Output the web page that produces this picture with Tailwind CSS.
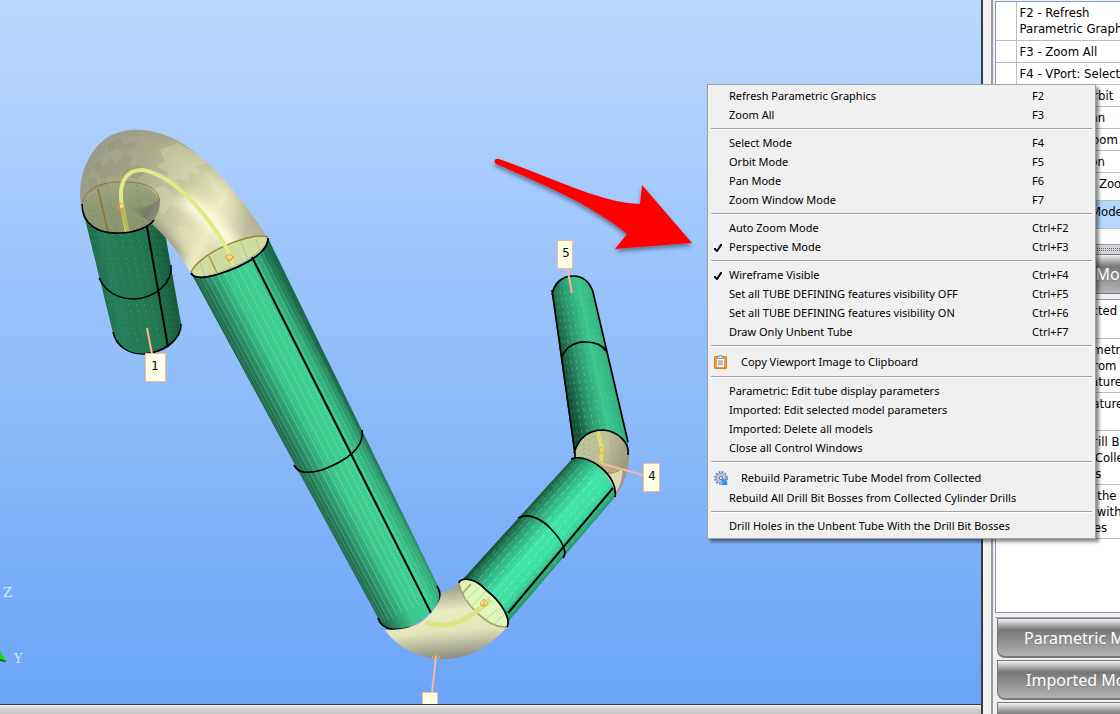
<!DOCTYPE html>
<html lang="en">

<head>
    <meta charset="UTF-8">
    <meta name="viewport" content="width=device-width, initial-scale=1.0">
    <title>Tube Viewport</title>
    <script src="https://cdn.jsdelivr.net/npm/@tailwindcss/browser@4"></script>
</head>

<body class="relative flex h-screen overflow-hidden bg-[#f0f0f0] font-['DejaVu_Sans_Condensed','DejaVu_Sans',sans-serif] text-[13px] text-black">

    <!-- Viewport -->
    <main class="flex min-w-0 flex-1 flex-col border-r-2 border-[#3a3d42]">
        <div class="min-h-0 flex-1 overflow-hidden bg-linear-to-b from-[#bbd8fd] to-[#6ba4f7]">
            <svg class="block h-[704px] w-[981px] max-w-none" viewBox="0 0 981 704" fill="none">
                <defs>
                    <linearGradient id="tube1" gradientUnits="userSpaceOnUse" x1="98" y1="287" x2="173" y2="274">
                        <stop offset="0" stop-color="#1f6b4c" />
                        <stop offset=".2" stop-color="#26805b" />
                        <stop offset=".7" stop-color="#21764f" />
                        <stop offset="1" stop-color="#175a3c" />
                    </linearGradient>
                    <linearGradient id="tube2" gradientUnits="userSpaceOnUse" x1="286" y1="449" x2="353" y2="413">
                        <stop offset="0" stop-color="#1c5f45" />
                        <stop offset=".15" stop-color="#288562" />
                        <stop offset=".4" stop-color="#3ac78c" />
                        <stop offset=".7" stop-color="#3cd092" />
                        <stop offset=".88" stop-color="#2ea676" />
                        <stop offset="1" stop-color="#1a6b4a" />
                    </linearGradient>
                    <linearGradient id="tube3" gradientUnits="userSpaceOnUse" x1="518" y1="518" x2="565" y2="559">
                        <stop offset="0" stop-color="#175238" />
                        <stop offset=".22" stop-color="#2ea77a" />
                        <stop offset=".5" stop-color="#40e5a8" />
                        <stop offset=".75" stop-color="#3edea2" />
                        <stop offset="1" stop-color="#1f8a61" />
                    </linearGradient>
                    <linearGradient id="tube4" gradientUnits="userSpaceOnUse" x1="563" y1="365" x2="610" y2="355">
                        <stop offset="0" stop-color="#15503a" />
                        <stop offset=".3" stop-color="#2a946b" />
                        <stop offset=".65" stop-color="#3bc891" />
                        <stop offset="1" stop-color="#31ad7c" />
                    </linearGradient>
                    <linearGradient id="bend1" gradientUnits="userSpaceOnUse" x1="88" y1="160" x2="245" y2="235">
                        <stop offset="0" stop-color="#a0a18c" />
                        <stop offset=".3" stop-color="#aaab8a" />
                        <stop offset=".6" stop-color="#cbcba3" />
                        <stop offset=".8" stop-color="#eceabf" />
                        <stop offset="1" stop-color="#bdbc9c" />
                    </linearGradient>
                    <linearGradient id="bend2" gradientUnits="userSpaceOnUse" x1="440" y1="590" x2="446" y2="660">
                        <stop offset="0" stop-color="#a5a592" />
                        <stop offset=".3" stop-color="#e9ecc0" />
                        <stop offset=".6" stop-color="#e3e4ba" />
                        <stop offset="1" stop-color="#85887c" />
                    </linearGradient>
                    <linearGradient id="bend3" gradientUnits="userSpaceOnUse" x1="575" y1="445" x2="630" y2="462">
                        <stop offset="0" stop-color="#bcc69d" />
                        <stop offset=".5" stop-color="#bfc19a" />
                        <stop offset=".85" stop-color="#a1a085" />
                        <stop offset="1" stop-color="#9c9a93" />
                    </linearGradient>
                    <linearGradient id="throat" gradientUnits="userSpaceOnUse" x1="130" y1="206" x2="160" y2="222">
                        <stop offset="0" stop-color="#7a8063" stop-opacity="0" />
                        <stop offset=".5" stop-color="#76786a" stop-opacity=".9" />
                        <stop offset="1" stop-color="#969488" />
                    </linearGradient>
                    <linearGradient id="mouth" gradientUnits="userSpaceOnUse" x1="121" y1="183" x2="121" y2="233">
                        <stop offset="0" stop-color="#9ca47e" />
                        <stop offset=".5" stop-color="#8d9971" />
                        <stop offset="1" stop-color="#8b956c" />
                    </linearGradient>
                    <filter id="soft" x="-30%" y="-30%" width="160%" height="160%">
                        <feGaussianBlur stdDeviation="6" />
                    </filter>
                    <filter id="drop" x="-10%" y="-10%" width="120%" height="130%">
                        <feDropShadow dx="0" dy="3" stdDeviation="2" flood-color="#1d3557" flood-opacity=".55" />
                    </filter>
                    <clipPath id="bend1-clip">
                        <path d="M81 205C77 178 88 150 108 137C130 125 160 128 188 147C224 174 250 209 268 239C266 258 200 287 191 273C180 255 168 238 152 224C130 238 90 236 81 205Z" />
                    </clipPath>
                </defs>

                <!-- Tube 1 -->
                <path d="M84 215L113 333C118 352 142 358 164 350C176 343 181 334 181 323L163 222Z" fill="url(#tube1)" />
                <g class="stripes" data-edges="88,228,118,345 160,228,178,335" data-count="13" data-color="#54967a" data-dash="2 4"></g>
                <path d="M99 278C106 292 118 299 134 299C154 298 173 284 171 265M113 332C116 346 128 354 143 354C164 353 182 338 181 324" stroke="#000" stroke-width="1.5" />
                <path d="M147 227L168 347" stroke="#000" stroke-width="2" />

                <!-- Bend 1 -->
                <path d="M81 205C77 178 88 150 108 137C130 125 160 128 188 147C224 174 250 209 268 239C266 258 200 287 191 273C180 255 168 238 152 224C130 238 90 236 81 205Z" fill="url(#bend1)" />
                <g clip-path="url(#bend1-clip)">
                    <path d="M182 200Q215 215 236 252" stroke="#fffce0" stroke-width="16" filter="url(#soft)" />
                    <path d="M180 262Q163 235 145 222" stroke="#77776b" stroke-width="9" filter="url(#soft)" />
                    <path d="M80 205C78 175 88 148 112 136C150 118 190 145 215 168C240 192 258 220 268 239" stroke="#77796f" stroke-width="5" opacity=".5" filter="url(#soft)" />
                    <path d="M92 165l9-5 2 7 8-9 5 5 9-12 8 8-4 7 9 1-6 8-10-5-4 9-9-4-8 6zM108 145l12-7 4 6 14-3-4 8-12 4-5-5-8 4zM88 180l8-3 2 8 7-6 5 9-8 5-5-4-7 4zM122 165l9 5 7-6 8 7-9 9-6-4-9 2z" fill="#7f8068" opacity=".22" />
                    <path d="M160 150l18-7 20 12 10 9-12 2 5 9-14-3 3 9-14-2 4 7-17-4 6-9-12-7 8-5zM150 190l14-5 10 11 12 2-2 9-14-1-7 9-9-11-8-2zM176 228l10-5 7 11-8 7zM205 172l12 8 8 15-11-3z" fill="#e9e7c0" opacity=".3" />
                </g>
                <ellipse cx="121" cy="208" rx="39" ry="25" transform="rotate(-8 121 208)" fill="url(#mouth)" />
                <path d="M128 206C142 210 154 205 160 198C160 208 157 217 151 223Z" fill="url(#throat)" />
                <path d="M82 206C84 187 105 181 126 182C145 182 160 189 159 201" stroke="#857633" />
                <path d="M98 189L108 232" stroke="#857633" stroke-width="1.5" />
                <path d="M86 200L94 225M91 195L100 229M107 185L117 233M137 185L143 228" stroke="#7b864f" stroke-dasharray="2 3" opacity=".6" />
                <path d="M191 273C198 252 252 232 268 238C263 258 208 281 191 273Z" fill="#cfdc9f" />
                <path d="M191 272C202 251 254 231 268 237" stroke="#99843e" stroke-width="1.5" />
                <path d="M209 256L217 273" stroke="#a49554" stroke-width="1.5" />
                <path d="M200 263L205 277M226 248L233 267M241 242L248 260M256 239L260 252" stroke="#b9c08a" />
                <path d="M127 232L122 206C118 183 126 169 143 170C173 175 208 214 227 249L234 266" stroke="#dfeb86" stroke-width="4" />
                <path d="M122 208L128 232" stroke="#b9b750" stroke-width="4" />
                <path d="M82 204C82 225 99 234 119 233C136 233 150 226 154 220M191 273C194 279 206 278 219 274C245 266 269 252 268 238" stroke="#000" stroke-width="1.6" />
                <path d="M117 206l4-3 4 3-4 3zM118 207l3 4 4-4M225 257l4-3 5 3-5 3zM227 258l2 4 4-4" stroke="#f4983f" />

                <!-- Tube 2 -->
                <path d="M191 273C194 279 206 278 219 274C245 266 269 252 268 238L440 590C443 602 432 613 415 624C402 632 382 633 378 618Z" fill="url(#tube2)" />
                <g class="stripes" data-edges="195,278,381,624 267,248,440,594" data-count="17" data-color="#79dbb0" data-dash="none"></g>
                <path d="M191 273C194 279 206 278 219 274C245 266 269 252 268 238M294 465C298 473 306 474 322 470C343 462 365 450 362 430M378 618C383 633 399 630 413 627C430 620 447 602 437 586" stroke="#000" stroke-width="1.7" />
                <path d="M252 257L431 613" stroke="#000" stroke-width="2" />

                <!-- Bend 2 -->
                <path d="M385 630C400 630 417 629 431 613C437 606 441 599 441 592C449 591 455 588 459 582C474 573 511 606 507 627C487 650 464 659 443 659C417 659 396 646 385 630Z" fill="url(#bend2)" />
                <path d="M459 582C461 578 473 577 486 590C501 602 510 617 507 627C492 629 463 604 459 582Z" fill="#def5bb" />
                <path d="M459 583C462 602 488 629 507 627M462 594L471 584" stroke="#a5a063" stroke-width="1.5" />
                <path d="M466 600L478 588M471 607L485 592M478 613L493 600M486 619L499 608M494 624L504 615" stroke="#c0d69a" />
                <path d="M425 622C446 630 467 623 490 599" stroke="#d9e683" stroke-width="5" />
                <path d="M480 603l4-4 4 4-4 4zM480 605h8M484 599v8M432 657l4-3 4 3-4 4z" stroke="#f6a84c" />

                <!-- Tube 4 -->
                <path d="M552 294C554 283 563 276 573 276C584 276 591 283 593 291L628 442V455C615 432 590 431 574 453Z" fill="url(#tube4)" />
                <g class="stripes" data-edges="554,292,575,446 590,288,624,436" data-count="11" data-color="#76c5a2" data-dash="3 4"></g>

                <!-- Bend 3 -->
                <path d="M574 452C580 436 591 430 603 430C616 431 627 440 629 452C630 469 625 483 615 497C612 478 592 459 575 459Z" fill="url(#bend3)" />
                <path d="M622 468Q624 480 615 494L606 474Z" fill="#dcd9b5" />
                <path d="M584 443v13M589 439v19M594 436v22M610 435l3 31M616 437l3 28M621 441l2 19" stroke="#a6aa83" stroke-dasharray="2 3" />
                <path d="M628 457C625 468 617 474 606 473" stroke="#a2954d" stroke-width="1.5" />
                <path d="M598 432L602 449L601 464" stroke="#dbdf74" stroke-width="4" />
                <path d="M597 451l4-4 5 4-5 2zM598 466l4-5 4 5-4 3zM598 453h7" stroke="#f6a84c" />

                <!-- Tube 3 -->
                <path d="M463 579L572 459C590 452 612 478 615 492V497L508 622C507 602 482 580 463 579Z" fill="url(#tube3)" />
                <g class="stripes" data-edges="467,580,576,459 507,620,614,495" data-count="12" data-color="#90f2cc" data-dash="6 3"></g>
                <path d="M459 583C459 578 474 576 486 590C503 603 511 620 507 627M571 459C588 452 619 476 615 497M518 518C529 512 543 520 551 529C562 540 568 553 563 558" stroke="#000" stroke-width="1.7" />
                <path d="M508 613L613 488" stroke="#000" stroke-width="2" />
                <path d="M552 295C554 283 562 276 573 276C585 276 590 283 593 292L628 442M562 357C565 347 576 341 587 342C596 342 603 346 606 351M574 453C579 437 590 430 603 430C618 431 630 443 628 455M552 290L575 453V458" stroke="#000" stroke-width="1.7" />

                <!-- Leaders and node labels -->
                <path d="M147 328L152 354M567 267L572 293M603 464L643 475M436 656L432 693" stroke="#ffb597" stroke-width="2" />
                <g fill="#ffffe6" stroke="#ffb597">
                    <rect x="145.500" y="353.500" width="20" height="28" />
                    <rect x="557.500" y="240.500" width="15" height="28" />
                    <rect x="643.500" y="463.500" width="16" height="28" />
                    <rect x="422.500" y="692.500" width="15" height="14" />
                </g>
                <g fill="#000" font-size="13" text-anchor="middle" font-family="DejaVu Sans Condensed, DejaVu Sans, sans-serif">
                    <text x="155" y="370">1</text>
                    <text x="566" y="257">5</text>
                    <text x="652" y="480">4</text>
                </g>

                <!-- Axis marker -->
                <g fill="#d5e6fd" font-size="13" font-family="DejaVu Serif, serif">
                    <text x="3" y="597">Z</text>
                    <text x="14" y="663">Y</text>
                </g>
                <path d="M0 651L6 661L0 660Z" fill="#11e000" />
                <path d="M0 659L6 661V662L0 661Z" fill="#145c12" />

                <!-- Arrow -->
                <path d="M499 159C560 181 603 203 640 204L642 185L692 243L615 249L627 234C590 203 530 179 496 164C493 161 495 158 499 159Z" fill="#fe0000" filter="url(#drop)" />
            </svg>
        </div>
        <footer class="h-[10px] shrink-0 border-t border-[#3a3d42] bg-linear-to-b from-[#eeeeee] via-[#d0d0d0] to-[#c6c6c6]"></footer>
    </main>

    <!-- Side panel -->
    <aside class="flex w-[137px] shrink-0 flex-col overflow-hidden whitespace-nowrap pl-2">
        <div class="flex flex-1 flex-col border-l-2 border-[#9a9a9a] pl-[2px]">
            <div class="mt-px h-[244px] w-[240px] shrink-0 overflow-hidden border border-[#7f9db9] bg-white">
                <table class="w-full border-collapse leading-4">
                    <tbody id="hotkeys"></tbody>
                </table>
            </div>
            <div class="flex h-[9px] shrink-0 items-center bg-[#d4d4d4]">
                <div class="h-[3px] w-full border-y border-dotted border-[#666]"></div>
            </div>
            <button class="ml-[2px] h-10 w-[240px] shrink-0 rounded-bl-lg border border-[#777] bg-linear-to-b from-[#f4f4f4] via-[#777] via-30% to-[#b4b4b4] pl-6 text-left font-['Noto_Sans',sans-serif] text-base text-white text-shadow-2xs">Collected Mod</button>
            <div class="mt-[5px] h-[314px] w-[240px] shrink-0 overflow-hidden border border-[#7f9db9] bg-white">
                <table class="w-full border-collapse leading-4">
                    <tbody id="actions"></tbody>
                </table>
            </div>
            <div class="mt-1 flex w-[240px] flex-col gap-[2px] border-t border-[#aaa] pl-[2px]">
                <button class="h-10 rounded-bl-lg border border-b-2 border-[#777] bg-linear-to-b from-[#f4f4f4] via-[#777] via-30% to-[#b4b4b4] pl-[26px] text-left font-['Noto_Sans',sans-serif] text-base text-white text-shadow-2xs">Parametric Model</button>
                <button class="h-10 rounded-bl-lg border border-b-2 border-[#777] bg-linear-to-b from-[#f4f4f4] via-[#777] via-30% to-[#b4b4b4] pl-[28px] text-left font-['Noto_Sans',sans-serif] text-base text-white text-shadow-2xs">Imported Models</button>
                <button aria-label="More" class="h-10 rounded-bl-lg border border-[#777] bg-linear-to-b from-[#f4f4f4] via-[#777] via-30% to-[#b4b4b4]"></button>
            </div>
        </div>
    </aside>

    <!-- Context menu -->
    <div id="menu" role="menu" class="absolute top-[84px] right-6 flex w-[389px] flex-col border border-[#a0a0a0] bg-[#f0f0f0] px-[3px] py-[2px] font-['Noto_Sans','Open_Sans',sans-serif] text-[11px] shadow-[3px_3px_3px_rgba(0,0,0,0.45)]"></div>

    <script>
        const check = '<svg class="h-2 w-2" viewBox="0 0 8 8" fill="none" stroke="#000" stroke-width="2"><path d="M1 4V5L3 7L7 1V2"/></svg>';
        const clipboard = '<svg class="h-[14px] w-[13px]" viewBox="0 0 13 14"><rect x=".5" y="1.500" width="12" height="12" rx=".5" fill="#f39a33" stroke="#d08030"/><rect x="3" y="3.500" width="7" height="8.500" fill="#fff"/><path d="M4 5h5v6H4z" fill="#c3c5dc"/><path d="M4 6.500h5M4 8.500h5" stroke="#a4a6c2" stroke-width=".7"/><path d="M3.500 3.500v-2h2V.5h2v1h2v2z" fill="#e4e4df" stroke="#85857c" stroke-width=".8"/></svg>';
        const gear = '<svg class="h-[15px] w-[15px]" viewBox="0 0 15 15"><circle cx="7" cy="7" r="6" fill="none" stroke="#7a86ba" stroke-width="2" stroke-dasharray="1.800 1.340"/><circle cx="7" cy="7" r="4.800" fill="#bcc3e2" stroke="#8f9acb"/><circle cx="7" cy="7" r="1.600" fill="#f0f0fa" stroke="#6a749f"/><path d="M7 10l2-2h4v5l1 1H8l-1-1 2-2z" fill="#2c8fe8"/><path d="M6 13l3-2M10 8l4 4" stroke="#6fc0f8"/></svg>';

        const menuGroups = [
            [["Refresh Parametric Graphics", "F2"], ["Zoom All", "F3"]],
            [["Select Mode", "F4"], ["Orbit Mode", "F5"], ["Pan Mode", "F6"], ["Zoom Window Mode", "F7"]],
            [["Auto Zoom Mode", "Ctrl+F2"], ["Perspective Mode", "Ctrl+F3", check]],
            [["Wireframe Visible", "Ctrl+F4", check], ["Set all TUBE DEFINING features visibility OFF", "Ctrl+F5"], ["Set all TUBE DEFINING features visibility ON", "Ctrl+F6"], ["Draw Only Unbent Tube", "Ctrl+F7"]],
            [["Copy Viewport Image to Clipboard", "", clipboard]],
            [["Parametric: Edit tube display parameters", ""], ["Imported: Edit selected model parameters", ""], ["Imported: Delete all models", ""], ["Close all Control Windows", ""]],
            [["Rebuild Parametric Tube Model from Collected", "", gear], ["Rebuild All Drill Bit Bosses from Collected Cylinder Drills", ""]],
            [["Drill Holes in the Unbent Tube With the Drill Bit Bosses", ""]]
        ];

        document.getElementById('menu').innerHTML = menuGroups.map(group => group.map(([label, key, icon]) => {
            const large = icon && icon !== check;
            return `
                <button role="menuitem" class="flex w-full items-center text-left whitespace-nowrap ${large ? 'h-[22px]' : 'h-[19px]'}">
                    <span class="flex shrink-0 ${large ? 'w-[30px] pl-[3px]' : 'w-[18px] pl-[3px]'}">${icon || ''}</span>
                    <span class="flex-1">${label}</span>
                    <span class="${key ? 'w-[60px]' : ''}">${key}</span>
                </button>`;
        }).join('')).join('<div role="separator" class="h-[9px] pt-[3px]"><div class="h-[2px] border-t border-b border-t-[#a0a0a0] border-b-white"></div></div>');

        // label, row height class, row background
        const hotkeys = [
            ["F2 - Refresh<br>Parametric Graphics", "h-[38px]"],
            ["F3 - Zoom All", "h-[22px]"],
            ["F4 - VPort: Select", "h-[22px]"],
            ["F5 - VPort: Orbit", "h-[22px]"],
            ["F6 - VPort: Pan", "h-[22px]"],
            ["F7 - VPort: Zoom", "h-[22px]"],
            ["Wireframes on", "h-[22px]"],
            ["VPorts : Auto Zoom", "h-[28px]"],
            ["Perspective Mode", "h-[28px] bg-[#b5d8ff]"]
        ];
        const actions = [
            ["Use all Collected", "h-[38px]"],
            ["Rebuild Parametric<br>Tube Model from<br>Collected Features", "h-[54px]"],
            ["Delete all Features", "h-[38px]"],
            ["Rebuild all Drill Bit<br>Bosses from Collected<br>Cylinder Drills", "h-[54px]"],
            ["Drill Holes in the<br>Unbent Tube with<br>Drill Bit Bosses", "h-[54px]"]
        ];
        const row = ([label, cls]) => `<tr class="border-b border-[#bdbdbd] ${cls}"><td class="w-5 border-r border-[#bdbdbd]"></td><td class="pt-[3px] pl-[3px] align-top">${label}</td></tr>`;
        document.getElementById('hotkeys').innerHTML = hotkeys.map(row).join('');
        document.getElementById('actions').innerHTML = actions.map(row).join('');

        // Lengthwise facet lines, spread between the two edges of a tube
        document.querySelectorAll('.stripes').forEach(g => {
            const [a, b] = g.dataset.edges.split(' ').map(s => s.split(',').map(Number));
            const count = Number(g.dataset.count);
            let lines = '';
            for (let i = 1; i < count; i++) {
                const t = (1 - Math.cos(Math.PI * i / count)) / 2;
                const p = a.map((v, k) => v + (b[k] - v) * t);
                lines += `<line x1="${p[0]}" y1="${p[1]}" x2="${p[2]}" y2="${p[3]}" stroke="${g.dataset.color}" stroke-dasharray="${g.dataset.dash}" opacity="${0.2 + 0.5 * Math.sin(Math.PI * t)}"/>`;
            }
            g.innerHTML = lines;
        });
    </script>
</body>

</html>
